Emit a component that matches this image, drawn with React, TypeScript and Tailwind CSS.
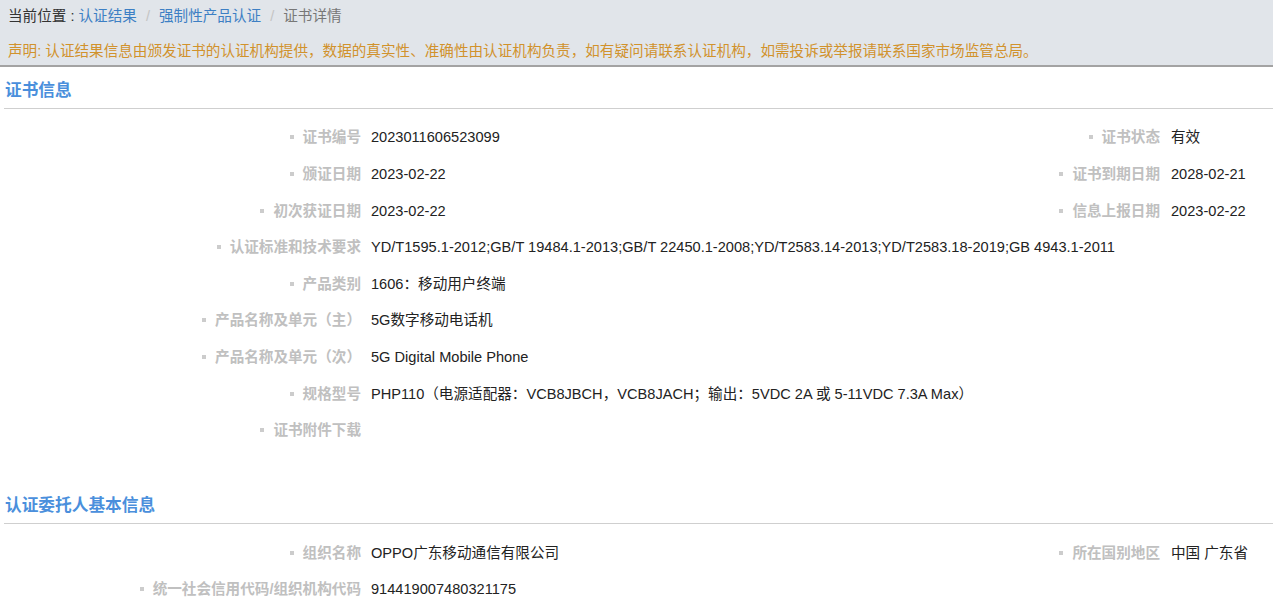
import React from 'react'

const FONT = '"Liberation Sans", "Noto Sans CJK SC", Arial, sans-serif'

interface Field {
  label: string
  value: string
}

interface Row {
  left: Field
  right?: Field
}

const certRows: Row[] = [
  { left: { label: '证书编号', value: '2023011606523099' }, right: { label: '证书状态', value: '有效' } },
  { left: { label: '颁证日期', value: '2023-02-22' }, right: { label: '证书到期日期', value: '2028-02-21' } },
  { left: { label: '初次获证日期', value: '2023-02-22' }, right: { label: '信息上报日期', value: '2023-02-22' } },
  {
    left: {
      label: '认证标准和技术要求',
      value:
        'YD/T1595.1-2012;GB/T 19484.1-2013;GB/T 22450.1-2008;YD/T2583.14-2013;YD/T2583.18-2019;GB 4943.1-2011',
    },
  },
  { left: { label: '产品类别', value: '1606：移动用户终端' } },
  { left: { label: '产品名称及单元（主）', value: '5G数字移动电话机' } },
  { left: { label: '产品名称及单元（次）', value: '5G Digital Mobile Phone' } },
  {
    left: {
      label: '规格型号',
      value: 'PHP110（电源适配器：VCB8JBCH，VCB8JACH；输出：5VDC 2A 或 5-11VDC 7.3A Max）',
    },
  },
  { left: { label: '证书附件下载', value: '' } },
]

const clientRows: Row[] = [
  { left: { label: '组织名称', value: 'OPPO广东移动通信有限公司' }, right: { label: '所在国别地区', value: '中国 广东省' } },
  { left: { label: '统一社会信用代码/组织机构代码', value: '914419007480321175' } },
]

function Label({ text }: { text: string }) {
  return (
    <span className="font-bold text-[#c0c0c0] whitespace-nowrap">
      <span className="inline-block w-[4px] h-[4px] bg-[#cccccc] mr-[9px] align-middle relative -top-[1px]" />
      {text}
    </span>
  )
}

function InfoRow({ row }: { row: Row }) {
  return (
    <div className="flex items-center h-[36.6px] text-[14.6px]">
      <div className="w-[361px] shrink-0 text-right">
        <Label text={row.left.label} />
      </div>
      <div className="flex-1 pl-[10px] text-[#222] whitespace-nowrap">{row.left.value}</div>
      {row.right && (
        <div className="flex items-center shrink-0">
          <div className="w-[200px] text-right">
            <Label text={row.right.label} />
          </div>
          <div className="w-[113px] pl-[11px] text-[#222] whitespace-nowrap">{row.right.value}</div>
        </div>
      )}
    </div>
  )
}

function Section({ title, rows }: { title: string; rows: Row[] }) {
  return (
    <div>
      <div className="ml-[4px] h-[42px] flex items-center border-b border-[#cfcfcf]">
        <h2 className="pl-[1px] pt-[6px] text-[16.7px] font-bold text-[#4a8fdc]">{title}</h2>
      </div>
      <div className="pt-[11px]">
        {rows.map((r, i) => (
          <InfoRow key={i} row={r} />
        ))}
      </div>
    </div>
  )
}

export default function App() {
  return (
    <div className="w-[1273px] h-[609px] overflow-hidden bg-white" style={{ fontFamily: FONT }}>
      {/* Header */}
      <div className="h-[67px] bg-[#e1e5ea] border-b-2 border-[#a3a3a3] px-[8px] text-[14.6px]">
        <div className="h-[33px] flex items-center">
          <span className="text-[#333]">当前位置 :</span>
          <a className="ml-[4px] text-[#3d7fc4]">认证结果</a>
          <span className="mx-[9px] text-[#c4c4c4]">/</span>
          <a className="text-[#3d7fc4]">强制性产品认证</a>
          <span className="mx-[9px] text-[#c4c4c4]">/</span>
          <span className="text-[#777]">证书详情</span>
        </div>
        <div className="h-[34px] flex items-center pt-[4px] text-[#d1922c] whitespace-nowrap">
          声明: 认证结果信息由颁发证书的认证机构提供，数据的真实性、准确性由认证机构负责，如有疑问请联系认证机构，如需投诉或举报请联系国家市场监管总局。
        </div>
      </div>

      <Section title="证书信息" rows={certRows} />
      <div className="h-[33px]" />
      <Section title="认证委托人基本信息" rows={clientRows} />
    </div>
  )
}
